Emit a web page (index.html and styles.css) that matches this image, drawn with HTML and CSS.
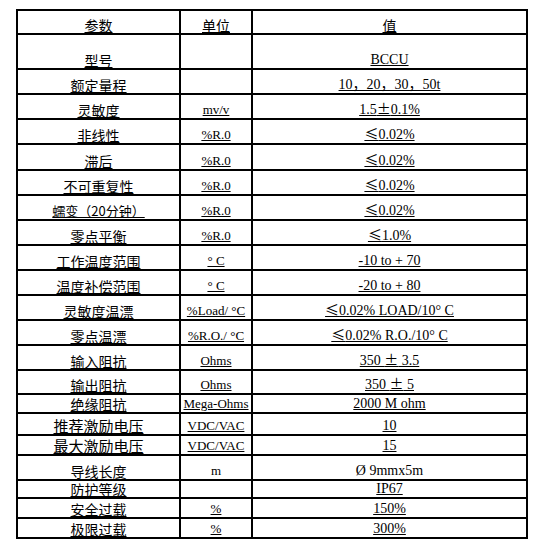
FILE: index.html
```html
<!DOCTYPE html>
<html lang="zh-CN">
<head>
<meta charset="utf-8">
<title>参数</title>
<link rel="stylesheet" href="styles.css">
</head>
<body>
<div class="spec">
  <div class="c c1"><span>参数</span></div><div class="c c1"><span>单位</span></div><div class="c c1"><span>值</span></div>
  <div class="c c1"><span>型号</span></div><div class="c c2"></div><div class="c c3"><span>BCCU</span></div>
  <div class="c c1"><span>额定量程</span></div><div class="c c2"></div><div class="c c3"><span>10，20，30，50t</span></div>
  <div class="c c1"><span>灵敏度</span></div><div class="c c2"><span>mv/v</span></div><div class="c c3"><span>1.5<i class="sym">±</i>0.1%</span></div>
  <div class="c c1"><span>非线性</span></div><div class="c c2"><span>%R.0</span></div><div class="c c3"><span><i class="sym">≤</i>0.02%</span></div>
  <div class="c c1"><span>滞后</span></div><div class="c c2"><span>%R.0</span></div><div class="c c3"><span><i class="sym">≤</i>0.02%</span></div>
  <div class="c c1"><span>不可重复性</span></div><div class="c c2"><span>%R.0</span></div><div class="c c3"><span><i class="sym">≤</i>0.02%</span></div>
  <div class="c c1"><span class="sm">蠕变（20分钟）</span></div><div class="c c2"><span>%R.0</span></div><div class="c c3"><span><i class="sym">≤</i>0.02%</span></div>
  <div class="c c1"><span>零点平衡</span></div><div class="c c2"><span>%R.0</span></div><div class="c c3"><span><i class="sym">≤</i>1.0%</span></div>
  <div class="c c1"><span>工作温度范围</span></div><div class="c c2"><span>° C</span></div><div class="c c3"><span>-10 to + 70</span></div>
  <div class="c c1"><span>温度补偿范围</span></div><div class="c c2"><span>° C</span></div><div class="c c3"><span>-20 to + 80</span></div>
  <div class="c c1"><span>灵敏度温漂</span></div><div class="c c2"><span>%Load/ °C</span></div><div class="c c3"><span><i class="sym">≤</i>0.02% LOAD/10° C</span></div>
  <div class="c c1"><span>零点温漂</span></div><div class="c c2"><span>%R.O./ °C</span></div><div class="c c3"><span><i class="sym">≤</i>0.02% R.O./10° C</span></div>
  <div class="c c1"><span>输入阻抗</span></div><div class="c c2"><span>Ohms</span></div><div class="c c3"><span>350 <i class="sym">±</i> 3.5</span></div>
  <div class="c c1"><span>输出阻抗</span></div><div class="c c2"><span>Ohms</span></div><div class="c c3"><span>350 <i class="sym">±</i> 5</span></div>
  <div class="c c1"><span>绝缘阻抗</span></div><div class="c c2"><span>Mega-Ohms</span></div><div class="c c3"><span>2000 M ohm</span></div>
  <div class="c c1"><span class="lg">推荐激励电压</span></div><div class="c c2"><span>VDC/VAC</span></div><div class="c c3"><span>10</span></div>
  <div class="c c1"><span class="lg">最大激励电压</span></div><div class="c c2"><span>VDC/VAC</span></div><div class="c c3"><span>15</span></div>
  <div class="c c1"><span class="plain">导线长度</span></div><div class="c c2"><span class="plain">m</span></div><div class="c c3"><span class="plain">Ø 9mmx5m</span></div>
  <div class="c c1"><span>防护等级</span></div><div class="c c2"></div><div class="c c3"><span>IP67</span></div>
  <div class="c c1"><span>安全过载</span></div><div class="c c2"><span>%</span></div><div class="c c3"><span>150%</span></div>
  <div class="c c1"><span>极限过载</span></div><div class="c c2"><span>%</span></div><div class="c c3"><span>300%</span></div>
</div>
</body>
</html>
```
FILE: styles.css
```css
html, body {
  margin: 0;
  background: #fff;
}
body {
  padding: 9px 0 0 16px;
  color: #000;
}
.spec {
  display: grid;
  width: 512px;
  box-sizing: border-box;
  grid-template-columns: 163px 72px 275px;
  grid-template-rows: 24px 35px 25px 25px 25px 26px 25px 25px 25px 25px 25px 25px 25px 25px 24px 19px 22px 20px 25px 18px 20px 20px;
  border-left: 2px solid #000;
  border-top: 2px solid #000;
}
.c {
  box-sizing: border-box;
  border-right: 2px solid #000;
  border-bottom: 2px solid #000;
  display: flex;
  align-items: flex-end;
  justify-content: center;
  padding-bottom: 1px;
  white-space: nowrap;
  min-height: 0;
}
.c span {
  text-decoration: underline;
  text-decoration-thickness: 1px;
  text-underline-offset: 1px;
  line-height: 14px;
}
.c span.plain {
  text-decoration: none;
}
.c1 {
  font: 14px "Noto Sans CJK SC", sans-serif;
}
.c1 .lg {
  font-size: 15px;
}
.c1 .sm {
  font-size: 13px;
}
.c2 {
  font: 13px "Liberation Serif", "Noto Sans CJK SC", serif;
}
.c3 {
  font: 14px "Liberation Serif", "Noto Sans CJK SC", serif;
}
.sym {
  font-style: normal;
  font-family: "Noto Sans CJK SC", sans-serif;
}
```
